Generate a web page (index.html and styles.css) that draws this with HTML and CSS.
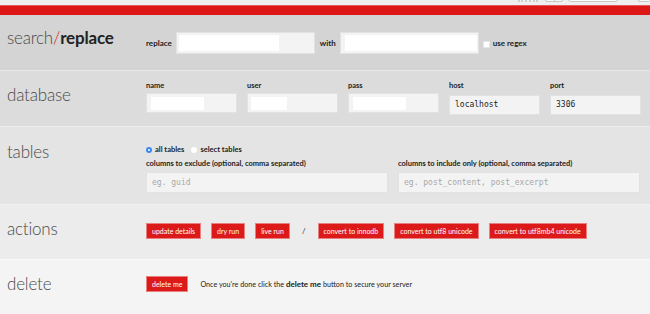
FILE: index.html
```html
<!DOCTYPE html>
<html lang="en">
<head>
  <meta charset="UTF-8">
  <meta name="viewport" content="width=device-width, initial-scale=1.0">
  <title>Search Replace DB</title>
  <link rel="stylesheet" href="styles.css">
</head>
<body>
  <div class="topstrip">
    <span class="tool-mark"></span>
    <span class="tool-seg"><i></i></span>
    <span class="tool-search"></span>
    <span class="tool-box"></span>
  </div>
  <div class="redbar"></div>

  <form id="srdb">
    <div class="section s1">
      <h2><span class="light">search</span><span class="slash">/</span><b>replace</b></h2>
      <div class="content row">
        <label class="inline" for="search">replace</label>
        <input type="text" id="search" class="field wide part">
        <label class="inline" for="replace">with</label>
        <input type="text" id="replace" class="field wide full">
        <span class="checkbox"></span>
        <label class="inline" for="regex">use regex</label>
      </div>
    </div>

    <div class="section s2">
      <h2><span class="light">database</span></h2>
      <div class="content fields">
        <div class="fieldset">
          <label for="name">name</label>
          <input type="text" id="name" class="field db part">
        </div>
        <div class="fieldset">
          <label for="user">user</label>
          <input type="text" id="user" class="field db short">
        </div>
        <div class="fieldset">
          <label for="pass">pass</label>
          <input type="password" id="pass" class="field db part">
        </div>
        <div class="fieldset">
          <label for="host">host</label>
          <input type="text" id="host" class="field db mono" value="localhost">
        </div>
        <div class="fieldset">
          <label for="port">port</label>
          <input type="text" id="port" class="field db mono" value="3306">
        </div>
      </div>
    </div>

    <div class="section s3">
      <h2><span class="light">tables</span></h2>
      <div class="content">
        <div class="radios">
          <span class="radio checked"></span><span class="radio-label">all tables</span>
          <span class="radio"></span><span class="radio-label">select tables</span>
        </div>
        <div class="columns">
          <div class="fieldset">
            <label for="exclude">columns to exclude (optional, comma separated)</label>
            <input type="text" id="exclude" class="field col mono" placeholder="eg. guid">
          </div>
          <div class="fieldset">
            <label for="include">columns to include only (optional, comma separated)</label>
            <input type="text" id="include" class="field col mono" placeholder="eg. post_content, post_excerpt">
          </div>
        </div>
      </div>
    </div>

    <div class="section s4">
      <h2><span class="light">actions</span></h2>
      <div class="content row buttons">
        <button type="button">update details</button>
        <button type="button">dry run</button>
        <button type="button">live run</button>
        <span class="sep">/</span>
        <button type="button">convert to innodb</button>
        <button type="button">convert to utf8 unicode</button>
        <button type="button">convert to utf8mb4 unicode</button>
      </div>
    </div>

    <div class="section s5">
      <h2><span class="light">delete</span></h2>
      <div class="content row">
        <button type="button">delete me</button>
        <p class="note">Once you're done click the <b>delete me</b> button to secure your server</p>
      </div>
    </div>
  </form>
</body>
</html>
```

FILE: styles.css
```css
body {
  margin: 0;
  padding: 0;
  font-family: Lato, "Open Sans", sans-serif;
  color: #222;
  background-color: #f4f4f4;
}
.topstrip {
  height: 5px;
  background-color: #efefef;
  display: flex;
  justify-content: flex-end;
  align-items: flex-end;
  overflow: hidden;
  padding-bottom: 3px;
  box-sizing: border-box;
}
.topstrip span {
  flex: none;
  height: 12px;
  box-sizing: border-box;
}
.tool-mark {
  width: 20px;
  border-bottom: 2px dotted #d0d0d0;
  margin-right: 7px;
}
.tool-seg {
  width: 18px;
  border: 1px solid #c8c8c8;
  border-radius: 2px;
  background: #f7f7f7;
  margin-right: 5px;
  position: relative;
}
.tool-seg i {
  position: absolute;
  left: 8px;
  top: 0;
  bottom: 0;
  border-left: 1px solid #c8c8c8;
}
.tool-search {
  width: 50px;
  border: 1px solid #c8c8c8;
  border-radius: 3px;
  background: #fff;
  margin-right: 20px;
}
.tool-box {
  width: 12px;
  border: 1px solid #c8c8c8;
  border-top: 0;
  border-right: 0;
  border-radius: 2px;
  background: #f7f7f7;
}
.redbar {
  height: 10px;
  background-color: #dd1616;
  border-top: 1px solid #e45a5a;
  box-sizing: border-box;
}

.section {
  display: flex;
  box-sizing: border-box;
  border-top: 1px solid rgba(255, 255, 255, 0.35);
}
.s1 { height: 55px; background-color: #d4d4d4; border-top: 0; }
.s2 { height: 56px; background-color: #dcdcdc; }
.s3 { height: 78px; background-color: #e4e4e4; }
.s4 { height: 55px; background-color: #ececec; }
.s5 { height: 55px; background-color: #f4f4f4; }

h2 {
  flex: none;
  width: 146px;
  margin: 0;
  padding: 14px 0 0 7px;
  box-sizing: border-box;
  font-size: 17px;
  line-height: 20px;
  font-weight: 300;
  color: #4a4a4a;
  letter-spacing: -0.2px;
}
h2 .slash {
  color: #dd1616;
  font-weight: 300;
}
h2 b {
  font-weight: 700;
  color: #222;
}
.s1 h2 { padding-top: 13px; }
.s3 h2 { padding-top: 15px; }

.content {
  flex: 1;
}
.row {
  display: flex;
  align-items: center;
}
.s1 .content { padding-top: 17px; align-items: flex-start; }
.s1 .inline { line-height: 22px; }
.s2 .content { padding-top: 10px; }
.s3 .content { padding-top: 18px; }
.s4 .content { padding-top: 18px; align-items: flex-start; }
.s5 .content { padding-top: 16px; align-items: flex-start; }

label {
  display: block;
  font-size: 7.5px;
  font-weight: 700;
  line-height: 9px;
  color: #222;
}
.inline {
  font-size: 8px;
}
.s1 label[for="search"] { margin-right: 4px; }
.s1 label[for="replace"] { margin: 0 4px 0 5px; }

.field {
  box-sizing: border-box;
  border: 1px solid #e2e2e2;
  background-color: #f3f3f3;
  border-radius: 0;
  margin: 0;
  padding: 0 5px;
  outline: none;
}
.wide {
  width: 139px;
  height: 22px;
}
.part {
  background: linear-gradient(#fff, #fff) 2px 2px / 100px calc(100% - 4px) no-repeat, #f3f3f3;
}
.db.part {
  background: linear-gradient(#fff, #fff) 4px 3px / 53px 13px no-repeat, #f3f3f3;
}
.short {
  background: linear-gradient(#fff, #fff) 3px 3px / 36px 13px no-repeat, #f3f3f3;
}
.full {
  background: linear-gradient(#fff, #fff) 4px 2px / calc(100% - 5px) calc(100% - 4px) no-repeat, #f3f3f3;
}
.checkbox {
  width: 5px;
  height: 5px;
  background: #fff;
  border: 1px solid #e6e6e6;
  margin: 9px 3px 0 4px;
  flex: none;
}

.fields {
  display: flex;
  gap: 10px;
}
.fieldset label {
  margin-bottom: 1px;
}
.db {
  width: 91px;
  height: 20px;
}
.mono {
  font-family: "DejaVu Sans Mono", monospace;
  font-size: 8px;
  color: #222;
}
.mono::placeholder {
  color: #a8a8a8;
}

.radios {
  display: flex;
  align-items: center;
  height: 9px;
  margin-bottom: 5px;
}
.radio {
  width: 6px;
  height: 6px;
  border-radius: 50%;
  background: #fff;
  box-sizing: border-box;
  margin-right: 3px;
}
.radio.checked {
  background: #fff;
  border: 2px solid #3b87f0;
}
.radio-label {
  font-size: 7.5px;
  font-weight: 700;
  margin-right: 7px;
}
.columns {
  display: flex;
  gap: 10px;
}
.col {
  width: 242px;
  height: 21px;
}

.buttons {
  gap: 10px;
}
button {
  height: 16px;
  padding: 0 5px;
  background-color: #dd1a1a;
  color: #fff;
  border: 1px solid #e98080;
  border-radius: 0;
  font-family: Lato, "Open Sans", sans-serif;
  font-size: 7px;
  line-height: 14px;
  cursor: pointer;
}
button:hover {
  background-color: #c21010;
}
.sep {
  font-size: 8px;
  line-height: 16px;
  margin: 0 2px;
  color: #333;
}
.note {
  margin: 0 0 0 12px;
  font-size: 7.2px;
  line-height: 16px;
  color: #222;
}
.note b {
  font-size: 8px;
}
```
